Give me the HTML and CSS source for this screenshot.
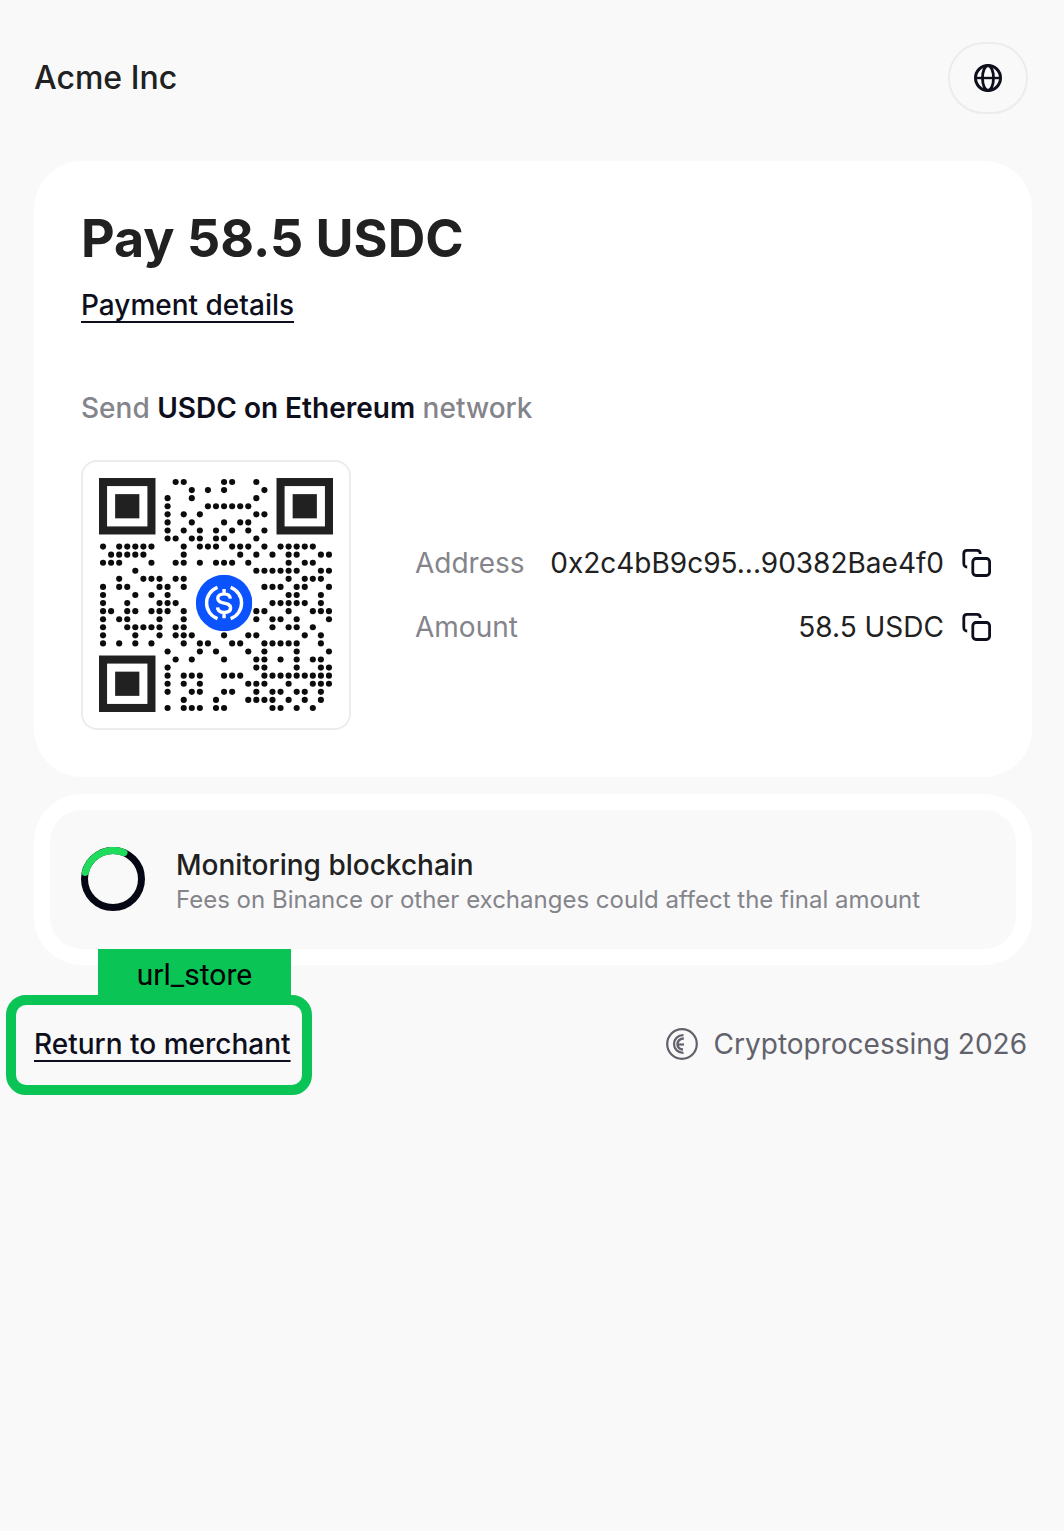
FILE: index.html
```html
<!DOCTYPE html>
<html lang="en">
<head>
    <meta charset="UTF-8">
    <meta name="viewport" content="width=device-width, initial-scale=1.0">
    <title>Pay 58.5 USDC</title>
    <link rel="stylesheet" href="styles.css">
</head>
<body>
    <header class="header">
        <div class="merchant">Acme Inc</div>
        <button class="lang-btn" type="button" aria-label="Language">
            <svg width="32" height="32" viewBox="0 0 32 32" fill="none" stroke="#0e0f1c">
                <circle cx="16" cy="16" r="12.5" stroke-width="3"/>
                <ellipse cx="16" cy="16" rx="5.5" ry="12.5" stroke-width="2.8"/>
                <path d="M3.5 16h25" stroke-width="2.4"/>
            </svg>
        </button>
    </header>

    <main>
        <section class="card">
            <h1>Pay 58.5 USDC</h1>
            <a class="link" href="#details">Payment details</a>
            <p class="send">Send <strong>USDC on Ethereum</strong> network</p>

            <div class="payment">
                <div class="qr">
                    <svg id="qr" viewBox="0 0 29 29" role="img" aria-label="QR code">
                        <g id="qrDots" fill="#0c0c0c"></g>
                        <g fill="none" stroke="#212121">
                            <rect x="0.5" y="0.5" width="6" height="6"/>
                            <rect x="22.5" y="0.5" width="6" height="6"/>
                            <rect x="0.5" y="22.5" width="6" height="6"/>
                        </g>
                        <g fill="#212121">
                            <rect x="2" y="2" width="3" height="3"/>
                            <rect x="24" y="2" width="3" height="3"/>
                            <rect x="2" y="24" width="3" height="3"/>
                        </g>
                        <!-- USDC logo -->
                        <svg x="12" y="12" width="7" height="7" viewBox="0 0 56 56" fill="none" stroke="#fff" stroke-width="3.4">
                            <circle cx="28" cy="28" r="28" fill="#0b53ff" stroke="none"/>
                            <path d="M21.5 12.500a16.500 16.500 0 0 0 0 31M34.500 12.500a16.500 16.500 0 0 1 0 31"/>
                            <path d="M34.2 23.6c-.3-3-2.600-4.700-6.200-4.700-3.700 0-6.200 1.700-6.200 4.500 0 6.500 12.700 2.700 12.700 9.300 0 2.900-2.600 4.600-6.500 4.600-3.800 0-6.300-1.800-6.500-5M28 14v5M28 37v6"/>
                        </svg>
                    </svg>
                </div>

                <dl class="details">
                    <div class="row">
                        <dt>Address</dt>
                        <dd>0x2c4bB9c95...90382Bae4f0</dd>
                        <dd>
                            <button class="copy-btn" type="button" aria-label="Copy address">
                                <svg width="32" height="32" viewBox="0 0 32 32" fill="none" stroke="#0e0f1c" stroke-width="2.8">
                                    <path d="M7.200 20C5 20 3.800 18.800 3.800 16.600V6.500C3.800 4.500 5 3.400 7 3.400H17C19 3.400 20.200 4.500 20.300 7"/>
                                    <rect x="12.800" y="11.500" width="16.800" height="17" rx="3.200"/>
                                </svg>
                            </button>
                        </dd>
                    </div>
                    <div class="row">
                        <dt>Amount</dt>
                        <dd>58.5 USDC</dd>
                        <dd>
                            <button class="copy-btn" type="button" aria-label="Copy amount">
                                <svg width="32" height="32" viewBox="0 0 32 32" fill="none" stroke="#0e0f1c" stroke-width="2.8">
                                    <path d="M7.200 20C5 20 3.800 18.800 3.800 16.600V6.500C3.800 4.500 5 3.400 7 3.400H17C19 3.400 20.200 4.500 20.300 7"/>
                                    <rect x="12.800" y="11.500" width="16.800" height="17" rx="3.200"/>
                                </svg>
                            </button>
                        </dd>
                    </div>
                </dl>
            </div>
        </section>

        <section class="status">
            <div class="status-inner">
                <svg class="spinner" width="64" height="64" viewBox="0 0 64 64" fill="none" stroke-width="7">
                    <circle cx="32" cy="32" r="28.500" stroke="#050714"/>
                    <path d="M4.300 25.500A28.500 28.500 0 0 1 43 5.700" stroke="#1fdc5c" stroke-linecap="round"/>
                </svg>
                <div>
                    <div class="status-title">Monitoring blockchain</div>
                    <div class="status-text">Fees on Binance or other exchanges could affect the final amount</div>
                </div>
            </div>
        </section>
    </main>

    <footer class="footer">
        <div class="return">
            <a class="link" href="#merchant">Return to merchant</a>
            <div class="highlight"></div>
            <div class="highlight-label">url_store</div>
        </div>
        <div class="brand">
            <svg width="34" height="34" viewBox="0 0 34 34" fill="none" stroke="#62626c">
                <circle cx="17" cy="17" r="14.800" stroke-width="2.200"/>
                <path d="M18.500 8.200C13 8 9 12 9 17s4 9 9.500 8.800" stroke-width="2.200"/>
                <path d="M18.800 11.500c-3.500 0-6.300 2-6.300 5.500s2.500 5.500 5.500 5.500" stroke-width="2.600"/>
                <path d="M12.500 17.500h6.500" stroke-width="2.200"/>
            </svg>
            <span>Cryptoprocessing 2026</span>
        </div>
    </footer>

    <script src="script.js"></script>
</body>
</html>
```

FILE: styles.css
```css
body {
    margin: 0;
    padding: 42px 32px 42px 34px;
    background-color: #f9f9f9;
    color: #212121;
    font-family: Inter, 'Liberation Sans', sans-serif;
    font-size: 28px;
    line-height: 36px;
}
h1 {
    margin: 0 0 18px;
    font-size: 52px;
    line-height: 60px;
    font-weight: 700;
}
button {
    padding: 0;
    border: none;
    background: none;
    cursor: pointer;
}
svg {
    display: block;
}
.header {
    display: flex;
    justify-content: space-between;
    align-items: center;
    padding-right: 4px;
    margin-bottom: 47px;
}
.merchant {
    font-size: 32px;
    font-weight: 500;
}
.lang-btn {
    display: flex;
    align-items: center;
    justify-content: center;
    width: 80px;
    height: 72px;
    border: 2px solid #ececec;
    border-radius: 36px;
}
.card {
    padding: 48px 40px 47px 47px;
    border-radius: 48px;
    background-color: #fff;
}
.link {
    display: inline-block;
    color: #0e0f1c;
    font-weight: 500;
    text-decoration: underline;
    text-decoration-thickness: 2px;
    text-decoration-skip-ink: none;
    text-underline-offset: 6px;
}
.send {
    margin: 67px 0 34px;
    color: #84848b;
    font-weight: 500;
}
.send strong {
    color: #0e0f1c;
    font-weight: 600;
}
.payment {
    display: flex;
    align-items: center;
    gap: 64px;
}
.qr {
    flex: none;
    box-sizing: border-box;
    width: 270px;
    padding: 16px;
    border: 2px solid #ececec;
    border-radius: 16px;
}
.details {
    flex: 1;
    display: flex;
    flex-direction: column;
    gap: 28px;
    margin: 0;
}
.row {
    display: flex;
    align-items: center;
}
.row dt {
    flex: 1;
    color: #84848b;
}
.row dd {
    margin: 0 0 0 16px;
}
.copy-btn {
    display: block;
}
.status {
    margin-top: 17px;
    padding: 16px;
    border-radius: 48px;
    background-color: #fff;
}
.status-inner {
    display: flex;
    gap: 31px;
    padding: 37px 31px 32px;
    border-radius: 32px;
    background-color: #f9f9f9;
}
.spinner {
    flex: none;
}
.status-title {
    font-weight: 500;
}
.status-text {
    color: #84848b;
    font-size: 24px;
    line-height: 34px;
}
.footer {
    display: flex;
    justify-content: space-between;
    margin-top: 61px;
    padding-right: 5px;
}
.return {
    position: relative;
}
.highlight {
    position: absolute;
    inset: -31px -21px -33px -28px;
    border: 10px solid #0bc456;
    border-radius: 20px;
    pointer-events: none;
}
.highlight-label {
    position: absolute;
    left: 64px;
    bottom: 57px;
    box-sizing: border-box;
    width: 193px;
    height: 56px;
    padding-top: 8px;
    background-color: #0bc456;
    color: #000;
    font-family: Roboto, sans-serif;
    font-size: 30px;
    text-align: center;
}
.brand {
    display: flex;
    align-items: center;
    gap: 15px;
    color: #62626c;
}
```

FILE: script.js
```js
// filled columns of each row, finder patterns are drawn separately
const rows = [
    [9, 10, 15, 16, 19],
    [11, 13, 15, 20],
    [8, 11, 19],
    [8, 13, 14, 15, 16, 17, 18],
    [8, 10, 12, 19, 20],
    [8, 11, 15, 17, 18],
    [8, 10, 12, 14, 16, 18, 20],
    [8, 9, 11, 12, 14, 15, 19],
    [0, 2, 3, 4, 5, 6, 10, 12, 13, 14, 16, 17, 18, 20, 22, 23, 24, 25, 26],
    [1, 2, 3, 4, 5, 10, 17, 19, 21, 23, 24, 27, 28],
    [0, 1, 2, 6, 9, 10, 12, 14, 15, 16, 18, 23, 25, 26],
    [4, 19, 20, 21, 22, 23, 24, 27, 28],
    [2, 5, 6, 7, 9, 10, 23, 25, 26, 27],
    [0, 2, 3, 7, 8, 10, 20, 21, 22, 24, 25, 28],
    [0, 4, 6, 8, 23, 24, 27],
    [0, 3, 7, 8, 9, 21, 22, 23, 24, 25, 27],
    [0, 1, 3, 4, 6, 7, 8, 10, 19, 20, 23, 26, 27, 28],
    [0, 2, 3, 7, 10, 19, 21, 22, 24, 28],
    [0, 3, 4, 5, 6, 7, 9, 10, 21, 23, 24, 26],
    [0, 4, 7, 9, 10, 11, 15, 18, 19, 25, 27],
    [0, 2, 4, 6, 10, 12, 13, 16, 17, 20, 21, 22, 23, 24, 27],
    [8, 12, 14, 18, 20, 24, 28],
    [9, 11, 15, 19, 20, 22, 24, 26, 27],
    [8, 19, 20, 24, 27, 28],
    [8, 10, 11, 12, 15, 16, 17, 20, 21, 22, 23, 24, 25, 26, 27, 28],
    [8, 10, 12, 18, 19, 20, 23, 26, 27, 28],
    [8, 11, 12, 15, 16, 19, 21, 22, 24, 25, 27],
    [10, 14, 18, 19, 20, 21, 23, 25, 27],
    [8, 10, 11, 12, 14, 15, 21, 22, 24, 26]
];

const dots = document.getElementById('qrDots');
rows.forEach(function(cols, y) {
    cols.forEach(function(x) {
        const dot = document.createElementNS('http://www.w3.org/2000/svg', 'circle');
        dot.setAttribute('cx', x + 0.5);
        dot.setAttribute('cy', y + 0.5);
        dot.setAttribute('r', 0.38);
        dots.appendChild(dot);
    });
});
```
